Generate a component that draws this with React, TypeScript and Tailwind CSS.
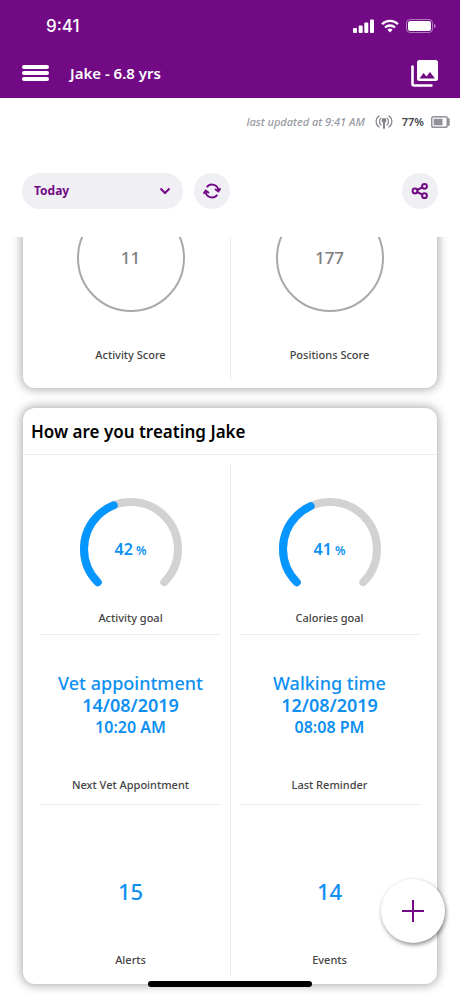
import { useState } from "react";
import type { ReactNode } from "react";

const DIVIDER = "border-[#ececee]";

function StatusBar() {
  return (
    <div className="flex h-12 items-center justify-between pl-[46px] pr-6 pt-1">
      <span className="font-['Inter',sans-serif] text-[17px] font-medium leading-6">9:41</span>
      <div className="flex items-center gap-[7px]">
        <svg width="21" height="14" viewBox="0 0 21 14" fill="currentColor" aria-hidden="true">
          <rect x="0" y="9" width="4" height="5" rx="1" />
          <rect x="5.700" y="6.500" width="4" height="7.500" rx="1" />
          <rect x="11.300" y="3.500" width="4" height="10.500" rx="1" />
          <rect x="17" y="0.500" width="4" height="13.500" rx="1" />
        </svg>
        <svg width="18" height="14" viewBox="0 0 18 14" fill="none" stroke="currentColor" strokeWidth="2.3" aria-hidden="true">
          <path d="M1 5.2a11.4 11.4 0 0 1 16 0" />
          <path d="M4 8.5a7.2 7.2 0 0 1 10 0" />
          <path d="M6.4 10.8a3.8 3.8 0 0 1 5.2 0L9 13.6z" fill="currentColor" stroke="none" />
        </svg>
        <svg width="30" height="14" viewBox="0 0 30 14" aria-hidden="true">
          <rect x="0.5" y="0.5" width="26" height="13" rx="3.5" fill="none" stroke="currentColor" strokeOpacity="0.45" />
          <rect x="2" y="2" width="23" height="10" rx="2.2" fill="currentColor" />
          <path d="M28 5v4c1-.4 1.6-1.100 1.600-2S29 5.400 28 5z" fill="currentColor" fillOpacity="0.5" />
        </svg>
      </div>
    </div>
  );
}

function Header() {
  return (
    <header className="bg-[#720a86] text-white">
      <StatusBar />
      <div className="flex h-[50px] items-center px-[22px]">
        <button type="button" aria-label="Menu" className="flex w-[27px] flex-col gap-[2px]">
          <span className="h-1 w-full rounded-xs bg-white" />
          <span className="h-1 w-full rounded-xs bg-white" />
          <span className="h-1 w-full rounded-xs bg-white" />
        </button>
        <h1 className="ml-[21px] flex-1 text-[15px] font-semibold leading-6">Jake - 6.8 yrs</h1>
        <button type="button" aria-label="Photos">
          <svg width="27" height="27" viewBox="0 0 27 27" fill="none" aria-hidden="true">
            <path d="M1.500 5.500v18.500a1.500 1.500 0 0 0 1.500 1.500H21.500" stroke="currentColor" strokeWidth="2.600" />
            <rect x="6" y="0" width="21" height="21" rx="2.500" fill="currentColor" />
            <path d="M8.500 18.500l4-5.500 3 3.500 3.500-4.500 5 6.500z" fill="#720a86" />
          </svg>
        </button>
      </div>
    </header>
  );
}

function DeviceStatus() {
  return (
    <div className="flex h-12 items-center justify-end pr-[10px] text-[11px] leading-4">
      <span className="font-medium italic text-[#9a9aa3]">last updated at 9:41 AM</span>
      <svg className="ml-[10px] text-[#85858d]" width="18" height="14" viewBox="0 0 18 14" fill="none" stroke="currentColor" strokeWidth="1.200" strokeLinecap="round" aria-hidden="true">
        <path d="M4 1C.2 3.700.2 9.300 4 12M14 1c3.800 2.700 3.800 8.300 0 11M6 3.200c-2 1.800-2 4.800 0 6.600M12 3.200c2 1.800 2 4.800 0 6.600" />
        <circle cx="9" cy="5.500" r="1.800" fill="currentColor" />
        <path d="M9 6v7" strokeWidth="2" />
      </svg>
      <span className="ml-[9px] font-semibold text-[#45454a]">77%</span>
      <svg className="ml-[7px]" width="19" height="12" viewBox="0 0 19 12" aria-hidden="true">
        <rect x="0.750" y="0.750" width="15.500" height="10.500" rx="1.800" fill="none" stroke="#92929a" strokeWidth="1.500" />
        <rect x="2.700" y="2.700" width="8.800" height="6.600" fill="#92929a" />
        <path d="M17.800 3v6" stroke="#92929a" strokeWidth="1.800" strokeLinecap="round" />
      </svg>
    </div>
  );
}

function Toolbar() {
  const round = "flex size-9 items-center justify-center rounded-full bg-[#f0eff4]";
  return (
    <div className="flex items-center px-[22px] pb-7 pt-[27px] text-[#720a86]">
      <div className="relative w-[161px]">
        <select
          aria-label="Period"
          className="h-9 w-full appearance-none rounded-full bg-[#f0eff4] pl-3 pr-8 text-xs font-bold leading-5"
        >
          <option>Today</option>
          <option>This week</option>
          <option>This month</option>
        </select>
        <svg className="pointer-events-none absolute right-3 top-3.5" width="12" height="8" viewBox="0 0 12 8" fill="none" stroke="currentColor" strokeWidth="2" aria-hidden="true">
          <path d="M1.500 1.500 6 6l4.500-4.500" />
        </svg>
      </div>
      <button type="button" aria-label="Refresh" className={`${round} ml-[11px]`}>
        <svg width="18" height="16" viewBox="0 0 18 16" fill="none" stroke="currentColor" strokeWidth="1.900" aria-hidden="true">
          <path d="M3.800 4.300A6.300 6.300 0 0 1 15.300 8" />
          <path d="M14.200 11.700A6.300 6.300 0 0 1 2.700 8" />
          <path d="M12 6l3.300 2.400L17.500 5.400M6 10 2.700 7.600.5 10.600" />
        </svg>
      </button>
      <button type="button" aria-label="Share" className={`${round} ml-auto`}>
        <svg width="18" height="18" viewBox="0 0 18 18" fill="none" stroke="currentColor" strokeWidth="2" aria-hidden="true">
          <circle cx="4" cy="9" r="2.400" />
          <circle cx="13.500" cy="4.300" r="2.400" />
          <circle cx="13.500" cy="13.700" r="2.400" />
          <path d="M6.200 8l5-2.600M6.200 10l5 2.600" />
        </svg>
      </button>
    </div>
  );
}

function Card({ children, className = "" }: { children: ReactNode; className?: string }) {
  return (
    <section className={`rounded-xl bg-white shadow-[0_0_10px_2px_rgba(0,0,0,0.3)] ${className}`}>
      {children}
    </section>
  );
}

function Score({ value, label }: { value: number; label: string }) {
  return (
    <div className="flex flex-col items-center pt-[7px]">
      <div className="flex size-[108px] items-center justify-center rounded-full border-2 border-[#a9a9a9] text-[17px] font-medium text-[#7d7d7d]">
        {value}
      </div>
      <p className="mt-[35px] text-[11px] font-medium leading-4 text-[#444444]">{label}</p>
    </div>
  );
}

function Gauge({ percent }: { percent: number }) {
  const arc = "M17.770 84.230a47 47 0 1 1 66.460 0";
  return (
    <div className="relative mt-6 size-[102px]">
      <svg width="102" height="102" viewBox="0 0 102 102" fill="none" strokeWidth="8" strokeLinecap="round" aria-hidden="true">
        <path d={arc} stroke="#d2d2d2" />
        <path d={arc} stroke="#0696ff" pathLength="100" strokeDasharray={`${percent} 200`} />
      </svg>
      <p className="absolute inset-0 flex items-baseline justify-center gap-[3px] pt-[39px] font-semibold">
        <span className="text-base leading-6">{percent}</span>
        <span className="text-xs">%</span>
      </p>
    </div>
  );
}

function Cell({ label, children, className = "" }: { label: string; children: ReactNode; className?: string }) {
  return (
    <div className={`mx-auto flex w-[181px] max-w-full flex-col items-center ${DIVIDER} ${className}`}>
      <div className="flex w-full flex-1 flex-col items-center justify-center text-center text-[#0d90f2]">{children}</div>
      <p className="text-[11px] font-medium leading-4 text-[#444444]">{label}</p>
    </div>
  );
}

function Reminder({ title, date, time }: { title: string; date: string; time: string }) {
  return (
    <div className="pb-[2px] font-semibold">
      <p className="text-lg font-medium leading-[22px]">{title}</p>
      <p className="text-lg leading-[22px]">{date}</p>
      <p className="text-base leading-[22px]">{time}</p>
    </div>
  );
}

export default function App() {
  const [open, setOpen] = useState(false);
  return (
    <div className="relative flex h-screen flex-col overflow-hidden bg-white font-['Noto_Sans','Open_Sans',sans-serif]">
      <Header />
      <DeviceStatus />
      <Toolbar />

      <main className="flex-1 overflow-hidden px-[23px]">
        <Card className="-mt-12 px-2 py-2">
          <div className="relative grid h-[183px] grid-cols-2">
            <div className={`absolute inset-y-0 left-1/2 border-l ${DIVIDER}`} />
            <Score value={11} label="Activity Score" />
            <Score value={177} label="Positions Score" />
          </div>
        </Card>

        <Card className="mt-5">
          <h2 className={`border-b ${DIVIDER} px-2 pb-[10px] pt-3 text-[17px] font-semibold leading-6 text-black`}>
            How are you treating Jake
          </h2>
          <div className="p-2">
            <div className="relative grid grid-cols-2 grid-rows-[172px_170px_171px]">
              <div className={`absolute inset-y-0 left-1/2 border-l ${DIVIDER}`} />
              <Cell label="Activity goal" className="border-b pb-2">
                <Gauge percent={42} />
              </Cell>
              <Cell label="Calories goal" className="border-b pb-2">
                <Gauge percent={41} />
              </Cell>
              <Cell label="Next Vet Appointment" className="border-b pb-[11px]">
                <Reminder title="Vet appointment" date="14/08/2019" time="10:20 AM" />
              </Cell>
              <Cell label="Last Reminder" className="border-b pb-[11px]">
                <Reminder title="Walking time" date="12/08/2019" time="08:08 PM" />
              </Cell>
              <Cell label="Alerts" className="pb-2">
                <p className="pt-6 text-[22px] font-medium leading-8">15</p>
              </Cell>
              <Cell label="Events" className="pb-2">
                <p className="pt-6 text-[22px] font-medium leading-8">14</p>
              </Cell>
            </div>
          </div>
        </Card>
      </main>

      <button
        type="button"
        aria-label="Add"
        aria-pressed={open}
        onClick={() => setOpen(!open)}
        className="absolute bottom-[53px] right-[15px] flex size-16 items-center justify-center rounded-full bg-white text-[#720a86] shadow-[1px_2px_4px_rgba(0,0,0,0.45)]"
      >
        <svg width="24" height="24" viewBox="0 0 24 24" fill="none" stroke="currentColor" strokeWidth="2" aria-hidden="true">
          <path d="M12 1v22M1 12h22" />
        </svg>
      </button>
      <div className="absolute bottom-[9px] left-1/2 h-[6px] w-[164px] -translate-x-1/2 rounded-full bg-black" />
    </div>
  );
}
